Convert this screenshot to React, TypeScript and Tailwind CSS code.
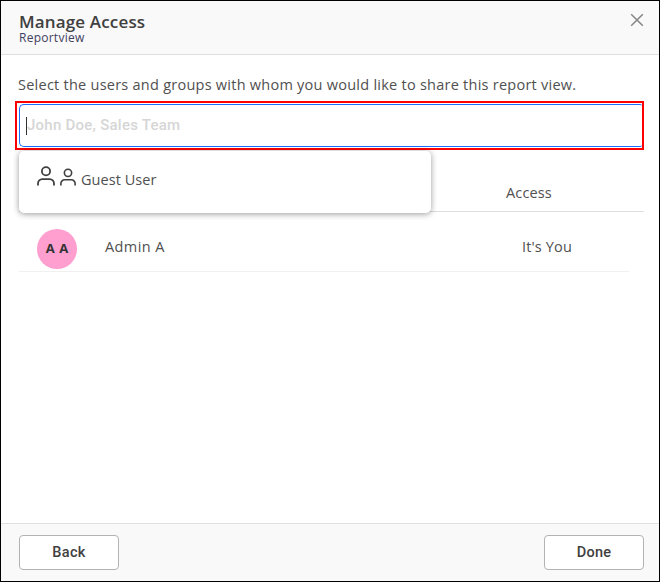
import React from "react";

const sans = "font-['Open_Sans','Noto_Sans',sans-serif]";
const roboto = "font-['Roboto',sans-serif]";

function PersonIcon({ className }: { className: string }) {
  return (
    <svg viewBox="0 0 18 20" className={className} fill="none" stroke="#404040" strokeWidth="1.8">
      <circle cx="9" cy="5.3" r="4.1" />
      <path d="M1 19.5v-2.1a4.3 4.3 0 0 1 4.3-4.3h7.4a4.3 4.3 0 0 1 4.3 4.3v2.1" />
    </svg>
  );
}

function FooterButton({ children }: { children: React.ReactNode }) {
  return (
    <button
      className={`h-[35px] w-[100px] rounded-[4px] border border-[#b3b3b3] bg-white pt-px text-[14.5px] leading-[20px] font-medium tracking-[0.3px] text-[#404040] ${roboto}`}
    >
      {children}
    </button>
  );
}

export default function App() {
  return (
    <div className={`flex h-[582px] w-[660px] flex-col border border-black bg-white text-[#505050] ${sans}`}>
      <header className="flex h-[54px] shrink-0 justify-between border-b border-[#dfdfdf] bg-[#f9f9f9] pt-[12px] pr-[15px] pl-[18px]">
        <div>
          <h1 className="text-[17px] leading-[17px] font-semibold tracking-[0.15px] whitespace-nowrap text-[#404040]">Manage Access</h1>
          <p className="mt-px text-[12px] leading-[14px] tracking-[0.25px] whitespace-nowrap text-[#404060]">Reportview</p>
        </div>
        <svg viewBox="0 0 14 14" className="h-[14px] w-[14px]" stroke="#858585" strokeWidth="1.5">
          <path d="M1.2 1.2l11.6 11.6M12.8 1.2L1.2 12.8" />
        </svg>
      </header>

      <main className="flex flex-1 flex-col pr-[15px] pl-[14px]">
        <p className="h-[46px] pt-[20px] pl-[3px] text-[14.5px] leading-[20px] tracking-[0.25px] whitespace-nowrap">
          Select the users and groups with whom you would like to share this report view.
        </p>
        <div className="h-[49px] w-[629px] shrink-0 border-2 border-[#ff0000] pt-px pl-[2px]">
          <div className="flex h-[43px] w-[623px] items-center rounded-l-[5px] rounded-r-[2px] border border-r-0 border-[#1a6dff] pl-[6px]">
            <span className="h-[18px] w-px bg-[#303030]" />
            <span className={`text-[15px] font-medium tracking-[0.25px] text-[#d6d6d6] ${roboto}`}>John Doe, Sales Team</span>
          </div>
        </div>
        <section className="relative pl-[4px]">
          <div className="h-[62px] border-b border-[#dedede] pt-[33px] pl-[487px] text-[14.5px] leading-[20px] tracking-[0.15px]">Access</div>
          <div className="flex h-[60px] w-[610px] border-b border-[#f0f0f0] pl-[18px]">
            <div className="mt-[17px] flex h-[40px] w-[40px] items-center justify-center rounded-full bg-[#ff9fcf] text-[13px] font-bold [word-spacing:1px] text-[#333]">
              A A
            </div>
            <span className="mt-[25px] ml-[28px] w-[417px] text-[14.5px] leading-[20px] tracking-[0.4px]">Admin A</span>
            <span className="mt-[25px] text-[14.5px] leading-[20px] tracking-[0.15px] whitespace-nowrap">It's You</span>
          </div>
          <div className="absolute top-[1px] left-[4px] flex h-[62px] w-[412px] rounded-[5px] bg-white pl-[18px] shadow-[0_1px_6px_rgba(0,0,0,0.4)]">
            <PersonIcon className="mt-[15px] h-[20px] w-[18px]" />
            <PersonIcon className="mt-[17px] ml-[5px] h-[18px] w-[16px]" />
            <span className="mt-[19px] ml-[5px] text-[14.5px] leading-[20px] tracking-[0.05px] whitespace-nowrap">Guest User</span>
          </div>
        </section>
      </main>

      <footer className="flex h-[58px] shrink-0 justify-between border-t border-[#dfdfdf] bg-[#f9f9f9] pt-[11px] pr-[15px] pl-[18px]">
        <FooterButton>Back</FooterButton>
        <FooterButton>Done</FooterButton>
      </footer>
    </div>
  );
}
